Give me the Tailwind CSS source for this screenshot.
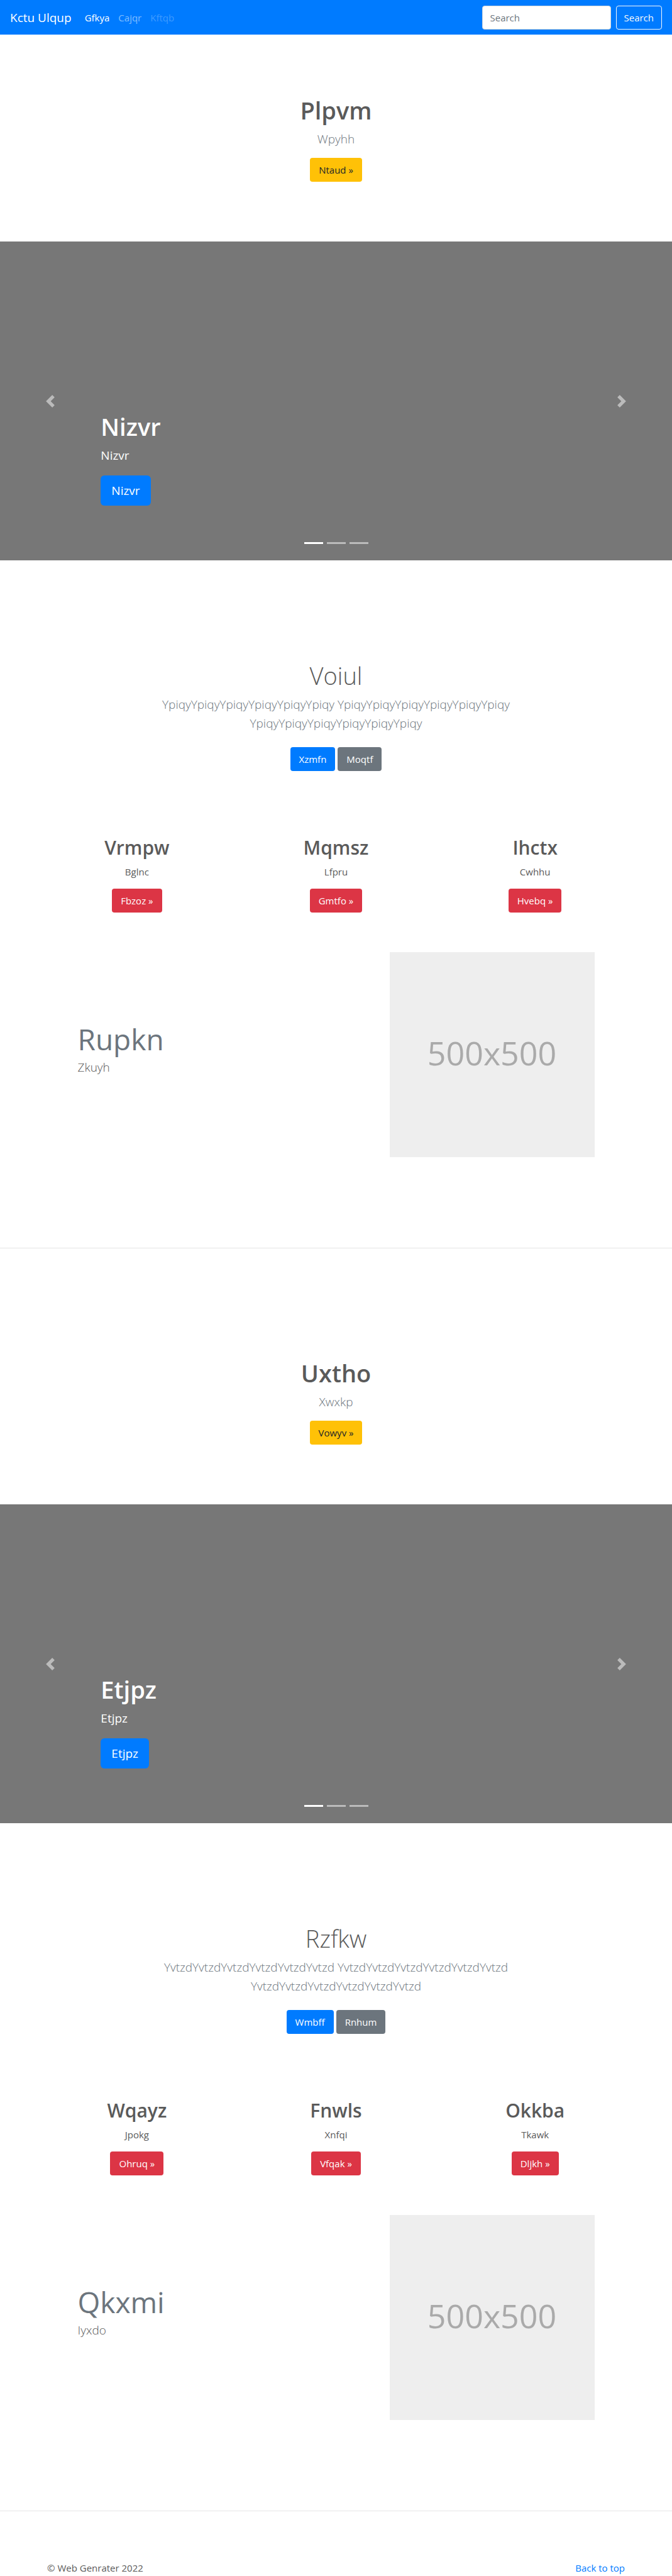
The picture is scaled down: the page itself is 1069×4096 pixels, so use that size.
<!DOCTYPE html>
<html lang="en">
<head>
<meta charset="utf-8">
<meta name="viewport" content="width=device-width, initial-scale=1">
<title>Kctu Ulqup</title>
<script src="https://cdn.jsdelivr.net/npm/@tailwindcss/browser@4"></script>
</head>
<body class="bg-white font-['Open_Sans',sans-serif] text-[15px] leading-6 text-[#5a5a5a]">

<header>
  <nav class="flex h-[55px] items-center bg-[#007bff] px-4">
    <a href="#" class="mr-3.5 text-[19px] leading-[30px] text-white">Kctu Ulqup</a>
    <ul class="flex flex-1">
      <li><a href="#" class="block px-[7px] text-white">Gfkya</a></li>
      <li><a href="#" class="block px-[7px] text-white/50">Cajqr</a></li>
      <li><a href="#" class="block px-[7px] text-white/25">Kftqb</a></li>
    </ul>
    <form class="flex gap-2">
      <input type="search" aria-label="Search" placeholder="Search" class="h-[38px] w-[205px] rounded border border-[#ced4da] bg-white px-3 text-[#495057] placeholder:text-[#6c757d]">
      <button type="button" class="h-[38px] rounded border border-[#f8f9fa] px-3 text-[#f8f9fa]">Search</button>
    </form>
  </nav>
</header>

<main>
  <section class="flex flex-col items-center pt-24 pb-[95px] text-center">
    <h1 class="text-[38px] leading-[48px] font-semibold">Plpvm</h1>
    <p class="mt-[7px] text-[19px] leading-[30px] font-light text-[#6c757d]">Wpyhh</p>
    <a href="#" class="mt-[15px] rounded bg-[#ffc107] px-3.5 py-[7px] text-[#212529]">Ntaud »</a>
  </section>

  <section class="relative flex h-[507px] flex-col items-start justify-end bg-[#777] px-[15%] pb-[87px] text-white">
    <h2 class="text-[38px] leading-[48px] font-semibold">Nizvr</h2>
    <p class="mt-[7px] text-[19px] leading-[30px]">Nizvr</p>
    <a href="#" class="mt-[17px] rounded-md bg-[#007bff] px-[17px] py-[9px] text-[19px] leading-[30px]">Nizvr</a>
    <button type="button" aria-label="Previous" class="absolute inset-y-0 left-0 flex w-[15%] items-center justify-center opacity-50">
      <svg class="size-5" viewBox="0 0 8 8" fill="currentColor"><path d="M5.25 0l-4 4 4 4 1.5-1.5-2.5-2.5 2.5-2.5-1.5-1.5z"/></svg>
    </button>
    <button type="button" aria-label="Next" class="absolute inset-y-0 right-0 flex w-[15%] items-center justify-center opacity-50">
      <svg class="size-5" viewBox="0 0 8 8" fill="currentColor"><path d="M2.75 0l-1.5 1.5 2.5 2.5-2.5 2.5 1.5 1.5 4-4-4-4z"/></svg>
    </button>
    <div class="absolute inset-x-0 bottom-[26px] flex justify-center gap-1.5">
      <button type="button" aria-label="Slide 1" class="h-[3px] w-[30px] bg-white"></button>
      <button type="button" aria-label="Slide 2" class="h-[3px] w-[30px] bg-white/50"></button>
      <button type="button" aria-label="Slide 3" class="h-[3px] w-[30px] bg-white/50"></button>
    </div>
  </section>

  <section class="mx-auto flex max-w-[600px] flex-col items-center pt-[159px] text-center">
    <h2 class="text-[38px] leading-[48px] font-light">Voiul</h2>
    <p class="mt-[7px] text-[19px] leading-[30px] font-light text-[#6c757d]">YpiqyYpiqyYpiqyYpiqyYpiqyYpiqy YpiqyYpiqyYpiqyYpiqyYpiqyYpiqy YpiqyYpiqyYpiqyYpiqyYpiqyYpiqy</p>
    <div class="mt-[23px] flex gap-1 text-white">
      <a href="#" class="rounded bg-[#007bff] px-3.5 py-[7px]">Xzmfn</a>
      <a href="#" class="rounded bg-[#6c757d] px-3.5 py-[7px]">Moqtf</a>
    </div>
  </section>

  <div class="mx-auto max-w-[950px]">
    <section class="grid grid-cols-3 pt-[103px] text-center">
      <div class="flex flex-col items-center">
        <h2 class="text-[30px] leading-[38px] font-semibold">Vrmpw</h2>
        <p class="mt-[7px]">Bglnc</p>
        <a href="#" class="mt-[15px] rounded bg-[#dc3545] px-3.5 py-[7px] text-white">Fbzoz »</a>
      </div>
      <div class="flex flex-col items-center">
        <h2 class="text-[30px] leading-[38px] font-semibold">Mqmsz</h2>
        <p class="mt-[7px]">Lfpru</p>
        <a href="#" class="mt-[15px] rounded bg-[#dc3545] px-3.5 py-[7px] text-white">Gmtfo »</a>
      </div>
      <div class="flex flex-col items-center">
        <h2 class="text-[30px] leading-[38px] font-semibold">Ihctx</h2>
        <p class="mt-[7px]">Cwhhu</p>
        <a href="#" class="mt-[15px] rounded bg-[#dc3545] px-3.5 py-[7px] text-white">Hvebq »</a>
      </div>
    </section>

    <section class="flex justify-between px-16 pt-[63px]">
      <div class="pt-[108px]">
        <h2 class="text-[46px] leading-[60px] text-[#6c757d]">Rupkn</h2>
        <p class="text-[19px] leading-[30px] font-light">Zkuyh</p>
      </div>
      <div class="flex size-[326px] items-center justify-center bg-[#eee] pb-1.5 text-[52px] leading-[60px] text-[#aaa]">500x500</div>
    </section>
  </div>

  <hr class="mt-[144px] mb-[78px] border-black/10">

  <section class="flex flex-col items-center pt-24 pb-[95px] text-center">
    <h1 class="text-[38px] leading-[48px] font-semibold">Uxtho</h1>
    <p class="mt-[7px] text-[19px] leading-[30px] font-light text-[#6c757d]">Xwxkp</p>
    <a href="#" class="mt-[15px] rounded bg-[#ffc107] px-3.5 py-[7px] text-[#212529]">Vowyv »</a>
  </section>

  <section class="relative flex h-[507px] flex-col items-start justify-end bg-[#777] px-[15%] pb-[87px] text-white">
    <h2 class="text-[38px] leading-[48px] font-semibold">Etjpz</h2>
    <p class="mt-[7px] text-[19px] leading-[30px]">Etjpz</p>
    <a href="#" class="mt-[17px] rounded-md bg-[#007bff] px-[17px] py-[9px] text-[19px] leading-[30px]">Etjpz</a>
    <button type="button" aria-label="Previous" class="absolute inset-y-0 left-0 flex w-[15%] items-center justify-center opacity-50">
      <svg class="size-5" viewBox="0 0 8 8" fill="currentColor"><path d="M5.25 0l-4 4 4 4 1.5-1.5-2.5-2.5 2.5-2.5-1.5-1.5z"/></svg>
    </button>
    <button type="button" aria-label="Next" class="absolute inset-y-0 right-0 flex w-[15%] items-center justify-center opacity-50">
      <svg class="size-5" viewBox="0 0 8 8" fill="currentColor"><path d="M2.75 0l-1.5 1.5 2.5 2.5-2.5 2.5 1.5 1.5 4-4-4-4z"/></svg>
    </button>
    <div class="absolute inset-x-0 bottom-[26px] flex justify-center gap-1.5">
      <button type="button" aria-label="Slide 1" class="h-[3px] w-[30px] bg-white"></button>
      <button type="button" aria-label="Slide 2" class="h-[3px] w-[30px] bg-white/50"></button>
      <button type="button" aria-label="Slide 3" class="h-[3px] w-[30px] bg-white/50"></button>
    </div>
  </section>

  <section class="mx-auto flex max-w-[600px] flex-col items-center pt-[159px] text-center">
    <h2 class="text-[38px] leading-[48px] font-light">Rzfkw</h2>
    <p class="mt-[7px] text-[19px] leading-[30px] font-light text-[#6c757d]">YvtzdYvtzdYvtzdYvtzdYvtzdYvtzd YvtzdYvtzdYvtzdYvtzdYvtzdYvtzd YvtzdYvtzdYvtzdYvtzdYvtzdYvtzd</p>
    <div class="mt-[23px] flex gap-1 text-white">
      <a href="#" class="rounded bg-[#007bff] px-3.5 py-[7px]">Wmbff</a>
      <a href="#" class="rounded bg-[#6c757d] px-3.5 py-[7px]">Rnhum</a>
    </div>
  </section>

  <div class="mx-auto max-w-[950px]">
    <section class="grid grid-cols-3 pt-[103px] text-center">
      <div class="flex flex-col items-center">
        <h2 class="text-[30px] leading-[38px] font-semibold">Wqayz</h2>
        <p class="mt-[7px]">Jpokg</p>
        <a href="#" class="mt-[15px] rounded bg-[#dc3545] px-3.5 py-[7px] text-white">Ohruq »</a>
      </div>
      <div class="flex flex-col items-center">
        <h2 class="text-[30px] leading-[38px] font-semibold">Fnwls</h2>
        <p class="mt-[7px]">Xnfqi</p>
        <a href="#" class="mt-[15px] rounded bg-[#dc3545] px-3.5 py-[7px] text-white">Vfqak »</a>
      </div>
      <div class="flex flex-col items-center">
        <h2 class="text-[30px] leading-[38px] font-semibold">Okkba</h2>
        <p class="mt-[7px]">Tkawk</p>
        <a href="#" class="mt-[15px] rounded bg-[#dc3545] px-3.5 py-[7px] text-white">Dljkh »</a>
      </div>
    </section>

    <section class="flex justify-between px-16 pt-[63px]">
      <div class="pt-[108px]">
        <h2 class="text-[46px] leading-[60px] text-[#6c757d]">Qkxmi</h2>
        <p class="text-[19px] leading-[30px] font-light">Iyxdo</p>
      </div>
      <div class="flex size-[326px] items-center justify-center bg-[#eee] pb-1.5 text-[52px] leading-[60px] text-[#aaa]">500x500</div>
    </section>
  </div>

  <hr class="mt-[144px] mb-[78px] border-black/10">
</main>

<footer class="flex justify-between px-[75px] pb-px">
  <p>© Web Genrater 2022</p>
  <a href="#" class="text-[#007bff]">Back to top</a>
</footer>

</body>
</html>
